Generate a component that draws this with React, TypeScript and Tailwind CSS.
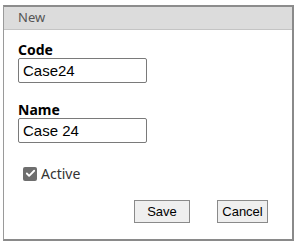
import { Check } from "lucide-react";

function App() {
  return (
    <div className="w-[300px] h-[251px] bg-white pt-[5px] pl-[3px]">
      <div className="w-[291px] h-[236px] border border-[#9a9a9a] border-t-2 border-r-2 border-b-2 border-t-[#8c8c8c] border-r-[#8a8a8a] border-b-[#8a8a8a] flex flex-col">
        <div className="h-[23px] bg-[#dcdcdc] border-b border-[#c4c4c4] pl-[14px] flex items-center text-[13px] text-[#555] font-['Noto_Sans',sans-serif]">
          New
        </div>
        <div className="pl-[14px] pt-[11px] flex flex-col">
          <label className="font-['Noto_Sans',sans-serif] font-bold text-[14px] leading-[17px] text-black">
            Code
          </label>
          <input
            defaultValue="Case24"
            className="w-[129px] h-[25px] border border-[#7a7a7a] rounded-[2px] px-[4px] text-[15px] text-black font-['Liberation_Sans',Arial,sans-serif] outline-none"
          />
          <label className="mt-[18px] font-['Noto_Sans',sans-serif] font-bold text-[14px] leading-[17px] text-black">
            Name
          </label>
          <input
            defaultValue="Case 24"
            className="w-[129px] h-[25px] border border-[#7a7a7a] rounded-[2px] px-[4px] text-[15px] text-black font-['Liberation_Sans',Arial,sans-serif] outline-none"
          />
          <div className="mt-[20px] ml-[5px] flex items-center gap-[4px]">
            <span className="w-[14px] h-[14px] rounded-[2px] bg-[#6e6e6e] flex items-center justify-center">
              <Check size={11} strokeWidth={4} color="#fff" />
            </span>
            <span className="font-['Noto_Sans',sans-serif] text-[14px] text-[#333]">Active</span>
          </div>
        </div>
        <div className="mt-[16px] flex justify-end gap-[27px] pr-[24px]">
          <button className="w-[56px] h-[23px] bg-[#efefef] border border-[#8a8a8a] text-[13px] text-black font-['Liberation_Sans',Arial,sans-serif]">
            Save
          </button>
          <button className="w-[51px] h-[23px] bg-[#efefef] border border-[#8a8a8a] text-[13px] text-black font-['Liberation_Sans',Arial,sans-serif]">
            Cancel
          </button>
        </div>
      </div>
    </div>
  );
}

export default App;
